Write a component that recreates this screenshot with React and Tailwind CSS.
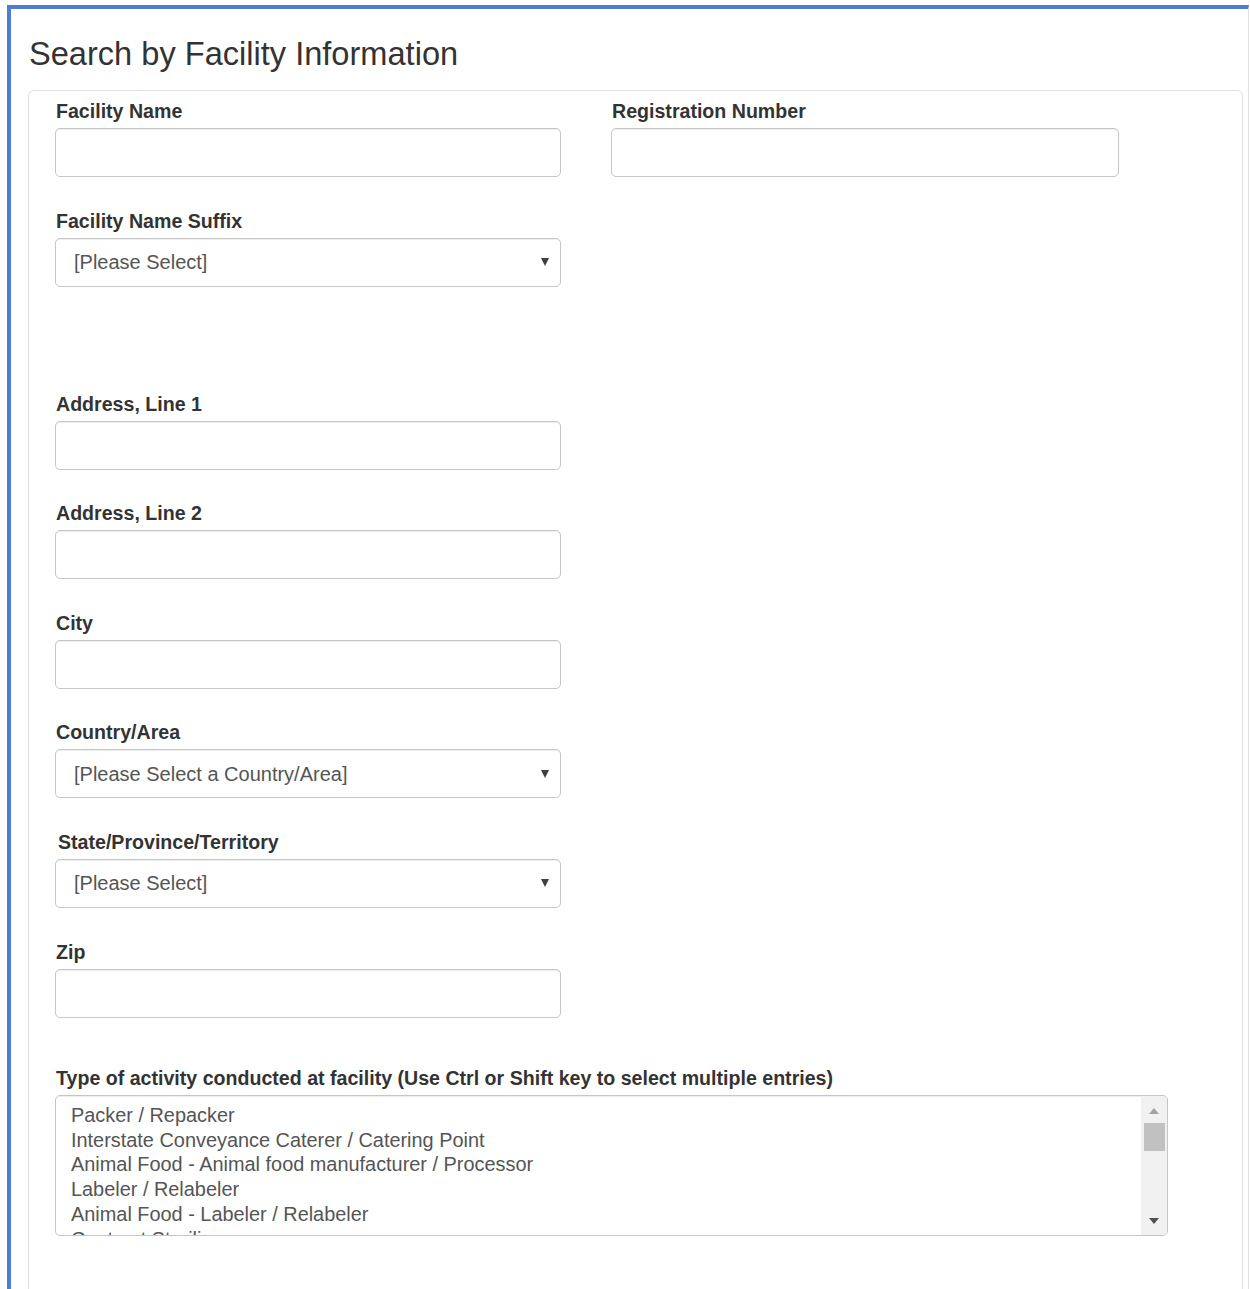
import React from "react";

const fieldBox =
  "rounded-[5px] border border-[#c6c6c6] bg-white shadow-[inset_0_1px_1px_rgba(0,0,0,0.075)]";

function Label({ children, className = "ml-[1px]" }) {
  return (
    <label
      className={`block text-[19.6px] leading-[27px] font-bold text-[#333] mb-[3px] ${className}`}
    >
      {children}
    </label>
  );
}

function TextInput({ width = "w-[506px]" }) {
  return (
    <input
      type="text"
      className={`block h-[49px] ${width} ${fieldBox} outline-none px-[16px] text-[20px] text-[#555]`}
    />
  );
}

function SelectBox({ text }) {
  return (
    <div
      className={`flex h-[49px] w-[506px] items-center justify-between pl-[18px] pr-[11px] text-[20px] text-[#555] ${fieldBox}`}
    >
      <span>{text}</span>
      <span className="h-0 w-0 border-l-[4.5px] border-r-[4.5px] border-t-[8px] border-l-transparent border-r-transparent border-t-[#3f3f3f]" />
    </div>
  );
}

function Field({ label, children, className = "mb-[30.6px]", labelClass = "ml-[1px]" }) {
  return (
    <div className={className}>
      <Label className={labelClass}>{label}</Label>
      {children}
    </div>
  );
}

const activities = [
  "Packer / Repacker",
  "Interstate Conveyance Caterer / Catering Point",
  "Animal Food - Animal food manufacturer / Processor",
  "Labeler / Relabeler",
  "Animal Food - Labeler / Relabeler",
  "Contract Sterilizer",
];

function ActivityList() {
  return (
    <div className={`flex h-[141px] w-[1113px] overflow-hidden ${fieldBox}`}>
      <ul className="flex-1 overflow-hidden pl-[15px] pt-[7px] text-[19.9px] leading-[24.7px] text-[#555]">
        {activities.map((a) => (
          <li key={a} className="whitespace-nowrap">
            {a}
          </li>
        ))}
      </ul>
      <div className="flex w-[26px] flex-col items-center bg-[#f1f1f1] pt-[12px] pb-[11px]">
        <span className="h-0 w-0 border-l-[5px] border-r-[5px] border-b-[6px] border-l-transparent border-r-transparent border-b-[#a3a3a3]" />
        <span className="mt-[9px] h-[28px] w-[21px] bg-[#c1c1c1]" />
        <span className="flex-1" />
        <span className="h-0 w-0 border-l-[5px] border-r-[5px] border-t-[6px] border-l-transparent border-r-transparent border-t-[#505050]" />
      </div>
    </div>
  );
}

export default function App() {
  return (
    <div className="h-[1289px] w-[1250px] overflow-hidden bg-white font-['Liberation_Sans',Arial,sans-serif]">
      <div className="ml-[7px] mt-[5px] h-[1284px] w-[1242px] overflow-hidden border-t-4 border-l-4 border-r border-t-[#4d7cd0] border-l-[#4d7cd0] border-r-[#e2e2e2] pl-[17px] pt-[27px]">
        <h3 className="mb-[19px] ml-[1px] text-[32.6px] leading-[35px] font-normal text-[#333]">
          Search by Facility Information
        </h3>

        <div className="h-[1300px] w-[1215px] rounded-[6px] border border-[#e0e0e0] px-[26px] pt-[7px]">
          <div className="flex gap-[50px]">
            <div>
              <Field label="Facility Name">
                <TextInput />
              </Field>
              <Field label="Facility Name Suffix" className="mb-[104px]">
                <SelectBox text="[Please Select]" />
              </Field>
            </div>
            <div>
              <Field label="Registration Number">
                <TextInput width="w-[508px]" />
              </Field>
            </div>
          </div>

          <Field label="Address, Line 1">
            <TextInput />
          </Field>
          <Field label="Address, Line 2">
            <TextInput />
          </Field>
          <Field label="City">
            <TextInput />
          </Field>
          <Field label="Country/Area">
            <SelectBox text="[Please Select a Country/Area]" />
          </Field>
          <Field label="State/Province/Territory" labelClass="ml-[3px]">
            <SelectBox text="[Please Select]" />
          </Field>
          <Field label="Zip" className="mb-[47.5px]">
            <TextInput />
          </Field>

          <Field
            label="Type of activity conducted at facility (Use Ctrl or Shift key to select multiple entries)"
            className=""
          >
            <ActivityList />
          </Field>
        </div>
      </div>
    </div>
  );
}
